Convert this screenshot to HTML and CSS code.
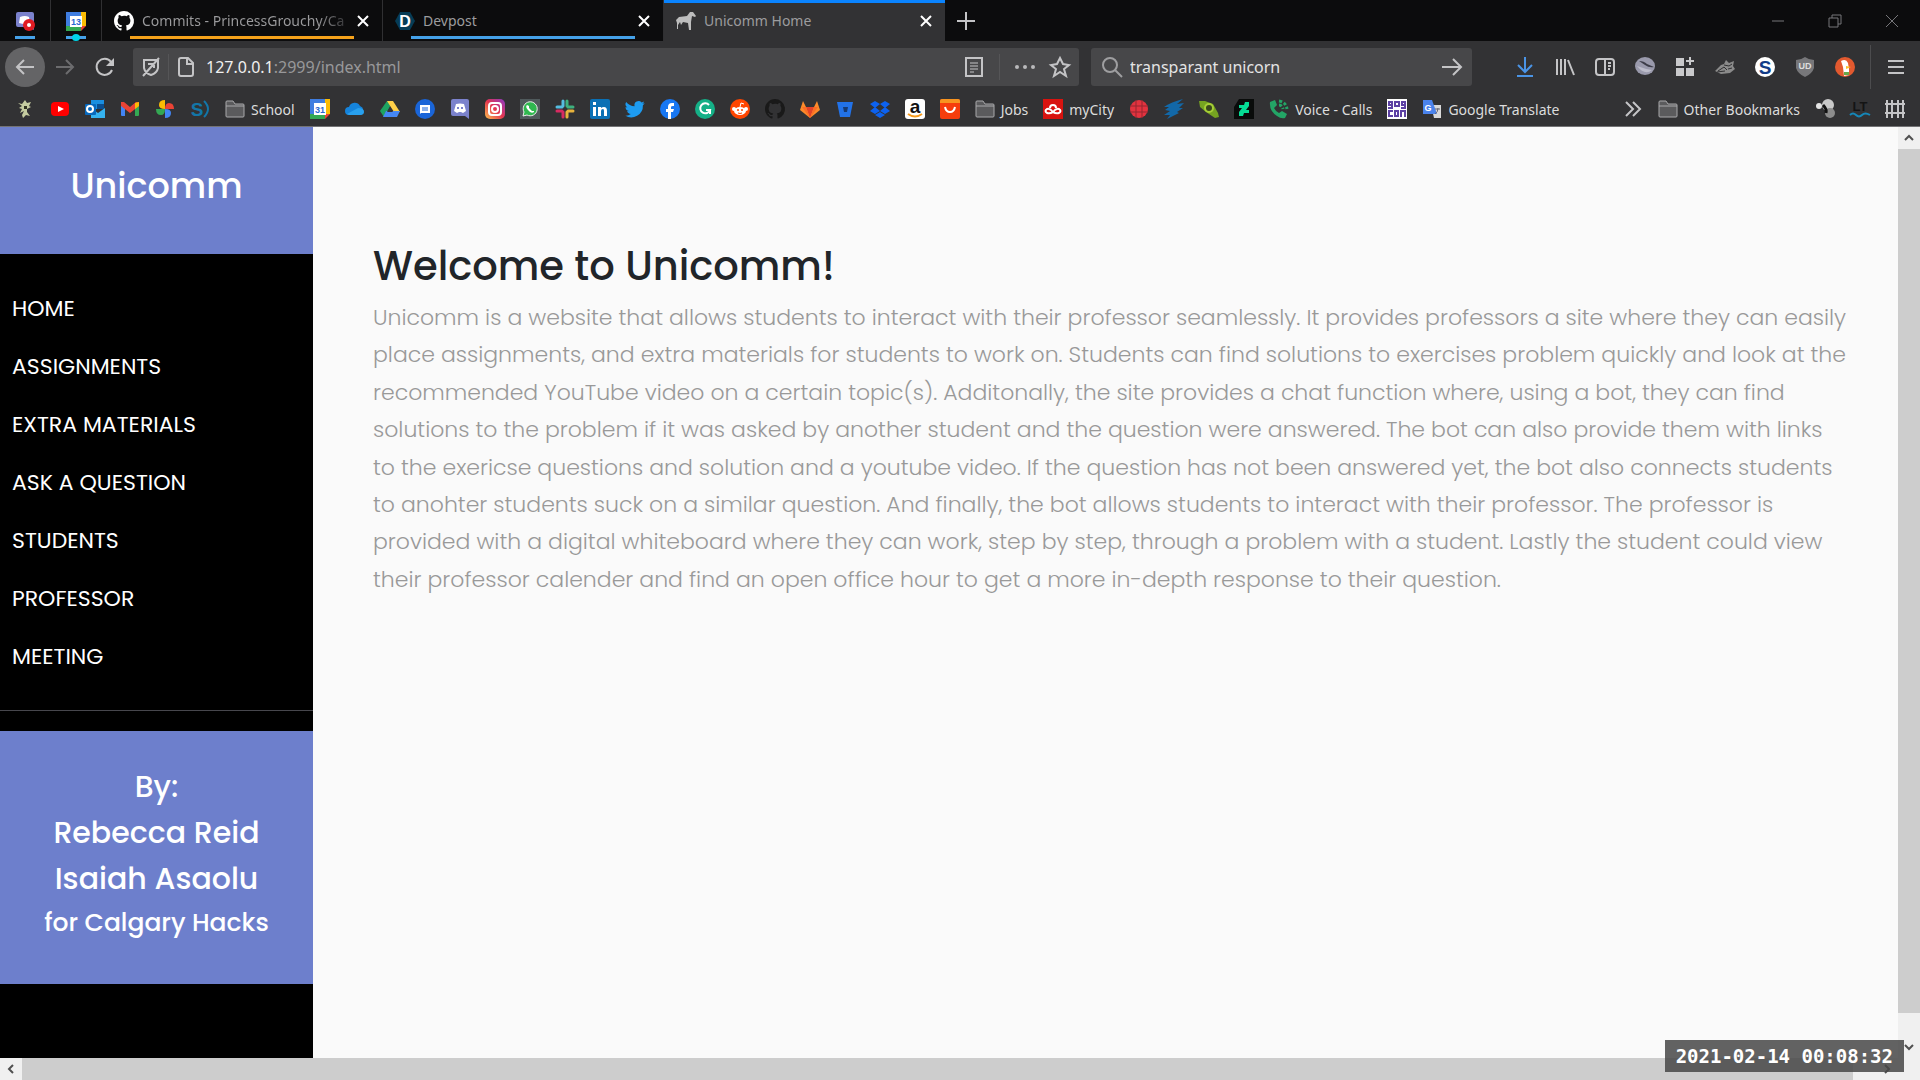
FILE: index.html
```html
<!DOCTYPE html>
<html lang="en">
<head>
  <meta charset="UTF-8">
  <meta name="viewport" content="width=device-width, initial-scale=1.0">
  <title>Unicomm Home</title>
  <link rel="stylesheet" href="styles.css">
</head>
<body>

<!-- Tabs -->
<header class="tabs">
  <a href="#" class="tab pinned" aria-label="Discord">
    <svg class="icon" viewBox="0 0 20 20"><path d="M1 3q0-2 2-2h14q2 0 2 2v16l-4-3H3q-2 0-2-2z" fill="#7b82cc"/><path d="M5 6q5-2 9 0l1 6q-5 2-11 0z" fill="#fff"/><circle cx="14" cy="14" r="6" fill="#e01b22"/><circle cx="14" cy="14" r="2" fill="#fff"/></svg>
    <span class="line blue"></span>
  </a>
  <a href="#" class="tab pinned" aria-label="Calendar">
    <svg class="icon" viewBox="0 0 20 20"><path d="M0 1h15v4H5v10H0z" fill="#3f7de0"/><path d="M15 1h5v14h-5z" fill="#fbbc05"/><path d="M0 15h15v5H0z" fill="#34a853"/><path d="M15 15h5l-5 5z" fill="#ea4335"/><path d="M4 5h12v11H4z" fill="#fff"/><text x="10" y="14" class="glyph small" fill="#2b67d1">13</text></svg>
    <span class="line blue dot"></span>
  </a>
  <a href="#" class="tab">
    <svg class="icon" viewBox="0 0 16 16"><path fill="#fff" d="M8 0C3.58 0 0 3.58 0 8c0 3.54 2.29 6.53 5.47 7.59.4.07.55-.17.55-.38v-1.49c-2.01.37-2.53-.49-2.69-.94-.09-.23-.48-.94-.82-1.13-.28-.15-.68-.52-.01-.53.63-.01 1.08.58 1.23.82.72 1.21 1.87.87 2.33.66.07-.52.28-.87.51-1.07-1.78-.2-3.64-.89-3.64-3.95 0-.87.31-1.59.82-2.15-.08-.2-.36-1.02.08-2.12 0 0 .67-.21 2.2.82A7.6 7.6 0 0 1 8 3.86c.68 0 1.36.09 2 .27 1.53-1.04 2.2-.82 2.2-.82.44 1.1.16 1.92.08 2.12.51.56.82 1.27.82 2.15 0 3.07-1.87 3.75-3.65 3.95.29.25.54.73.54 1.48v2.2c0 .21.15.46.55.38A8 8 0 0 0 8 0z"/></svg>
    <span class="tab-title fade">Commits - PrincessGrouchy/Ca</span>
    <button class="close" aria-label="Close tab"><svg viewBox="0 0 14 14"><path d="M2 2l10 10M12 2L2 12"/></svg></button>
    <span class="line orange"></span>
  </a>
  <a href="#" class="tab">
    <svg class="icon" viewBox="0 0 20 20"><path d="M5 1h10l5 9-5 9H5l-5-9z" fill="#063c55"/><text x="10" y="16" class="glyph big" fill="#fff">D</text></svg>
    <span class="tab-title">Devpost</span>
    <button class="close" aria-label="Close tab"><svg viewBox="0 0 14 14"><path d="M2 2l10 10M12 2L2 12"/></svg></button>
    <span class="line blue"></span>
  </a>
  <a href="#" class="tab active">
    <svg class="icon" viewBox="0 0 20 20"><path fill="#bdbdbd" d="M3 6l8-1 3-4 3 0 3 4-1 1-3-1-1 6 0 8h-2l-1-7-5-1-2 3v4H5v-4l-1-3-2 3 0 4H1l0-6-1-3z"/></svg>
    <span class="tab-title">Unicomm Home</span>
    <button class="close" aria-label="Close tab"><svg viewBox="0 0 14 14"><path d="M2 2l10 10M12 2L2 12"/></svg></button>
  </a>
  <button class="new-tab" aria-label="New tab"><svg viewBox="0 0 18 18"><path d="M9 0v18M0 9h18"/></svg></button>
  <div class="window-buttons">
    <button aria-label="Minimize"><svg viewBox="0 0 14 14"><path d="M1 7h12"/></svg></button>
    <button aria-label="Restore"><svg viewBox="0 0 14 14"><path d="M1 4h9v9H1zM4 4V1h9v9h-3"/></svg></button>
    <button aria-label="Close"><svg viewBox="0 0 14 14"><path d="M1 1l12 12M13 1L1 13"/></svg></button>
  </div>
</header>

<!-- Address bar -->
<div class="toolbar">
  <button class="round" aria-label="Back"><svg class="icon stroke" viewBox="0 0 20 20"><path d="M19 10H2M9 3l-7 7 7 7"/></svg></button>
  <button class="dim" aria-label="Forward"><svg class="icon stroke" viewBox="0 0 20 20"><path d="M1 10h17M11 3l7 7-7 7"/></svg></button>
  <button aria-label="Reload"><svg class="icon stroke" viewBox="0 0 20 20"><path d="M16 5a8 8 0 1 0 1 8"/><path d="M19 1v8h-8z" fill="#c4c4c6" stroke="none"/></svg></button>
  <div class="url">
    <svg class="icon stroke" viewBox="0 0 20 20"><path d="M3 3h14v8q-1 5-7 7-6-2-7-7zM18 1L2 19M7 7h6v4"/></svg>
    <span class="sep"></span>
    <svg class="icon stroke" viewBox="0 0 20 20"><path d="M3 3q0-2 2-2h7l5 5v11q0 2-2 2H5q-2 0-2-2zM11 1v6h6"/></svg>
    <label for="address">127.0.0.1</label>
    <input id="address" type="text" value=":2999/index.html">
    <button aria-label="Reader view"><svg class="icon stroke" viewBox="0 0 20 20"><path d="M2 1h16v18H2z"/><path d="M6 6h8M6 9h8M6 12h8M6 15h4" stroke-width="1"/></svg></button>
    <span class="sep far"></span>
    <button aria-label="Page actions"><svg class="icon" viewBox="0 0 20 20" fill="#b9b9bb"><circle cx="2" cy="10" r="2"/><circle cx="10" cy="10" r="2"/><circle cx="18" cy="10" r="2"/></svg></button>
    <button aria-label="Bookmark"><svg class="icon stroke" viewBox="0 0 20 20"><path d="M10 1l3 6 6 1-5 4 2 7-6-4-6 4 2-7-5-4 6-1z"/></svg></button>
  </div>
  <div class="search">
    <svg class="icon stroke" viewBox="0 0 20 20" opacity=".7"><circle cx="8" cy="8" r="7"/><path d="M13 13l7 7"/></svg>
    <input type="text" aria-label="Search" value="transparant unicorn">
    <button aria-label="Go"><svg class="icon stroke" viewBox="0 0 20 20"><path d="M0 10h19M11 2l8 8-8 8"/></svg></button>
  </div>
  <div class="extensions">
    <button aria-label="Downloads"><svg class="icon stroke download" viewBox="0 0 20 20"><path d="M10 0v14M3 8l7 7 7-7M2 19h16"/></svg></button>
    <button aria-label="Library"><svg class="icon stroke" viewBox="0 0 20 20"><path d="M2 2v16M6 2v16M10 2v16M13 3l6 15"/></svg></button>
    <button aria-label="Sidebars"><svg class="icon stroke" viewBox="0 0 20 20"><rect x="1" y="2" width="18" height="16" rx="3"/><path d="M10 2v16M13 6h3M13 9h3M13 12h2"/></svg></button>
    <button aria-label="Globe"><svg class="icon" viewBox="0 0 20 20"><ellipse cx="10" cy="9" rx="10" ry="9" fill="#9a9aac"/><path d="M4 4q5 0 8 3l7 3q-5 1-9-2z" fill="#3c3c48"/><path d="M2 9q8 3 15 4-7 6-15-4z" fill="#bcbcca"/></svg></button>
    <button aria-label="Add-ons"><svg class="icon" viewBox="0 0 20 20" fill="#c9c9cb"><path d="M1 1h8v8H1zM1 11h8v8H1zM11 11h8v8h-8zM14 0h2v3h3v2h-3v3h-2V5h-3V3h3z"/></svg></button>
    <button aria-label="Fox"><svg class="icon" viewBox="0 0 20 20"><path d="M0 14l6-6 3-1 2-4 3 3 5-2-1 5 2 3-5 4-9 1z" fill="#8a8a8a"/><path d="M3 14l6-4 3 3M9 8l5 1 3-2M13 12l4-1M2 15l8-1" stroke="#303032" fill="none"/></svg></button>
    <button aria-label="Startpage"><svg class="icon" viewBox="0 0 20 20"><circle cx="10" cy="10" r="10" fill="#fff"/><text x="10" y="17" class="glyph huge" fill="#123c87">S</text></svg></button>
    <button aria-label="uBlock"><svg class="icon" viewBox="0 0 20 20"><path d="M10 0q4 3 9 3v8q-2 6-9 9-7-3-9-9V3q5 0 9-3z" fill="#77777a"/><text x="10" y="12" class="glyph small" fill="#ddd">UD</text></svg></button>
    <button aria-label="DuckDuckGo"><svg class="icon" viewBox="0 0 20 20"><circle cx="10" cy="10" r="10" fill="#e2592f"/><path d="M6 4q5-3 7 2l1 6v6l-5 1-1-9z" fill="#fff"/><path d="M11 9l5 1-5 2z" fill="#fbc02d"/><path d="M9 15h5v3H9z" fill="#67a84a"/></svg></button>
  </div>
  <button class="menu" aria-label="Menu"><svg viewBox="0 0 16 16"><path d="M0 2h16M0 8h16M0 14h16"/></svg></button>
</div>

<!-- Bookmarks -->
<nav class="bookmarks" aria-label="Bookmarks">
  <a href="#" aria-label="Imp"><svg class="icon" viewBox="0 0 20 20"><path d="M3 4l4 1 3-4 2 3 4-1-2 4 2 1-4 2 0 3 3 4-4-1-3 3-1-3 2-4-4 2 2-4-3-1 3-2z" fill="#c5cca0"/><path d="M9 7h3v3H9z" fill="#30331f"/></svg></a>
  <a href="#" aria-label="YouTube"><svg class="icon" viewBox="0 0 20 20"><rect x="1" y="3" width="18" height="14" rx="4" fill="#f00"/><path d="M8 7l6 3-6 3z" fill="#fff"/></svg></a>
  <a href="#" aria-label="Outlook"><svg class="icon" viewBox="0 0 20 20"><path d="M6 1h13v9H6z" fill="#1a8fe0"/><path d="M6 9l7 5 7-5v10H6z" fill="#35b3f0"/><path d="M12 5h7v5h-7z" fill="#0a4f91"/><rect y="5" width="11" height="11" rx="1" fill="#0869bd"/><circle cx="5" cy="10" r="3" fill="none" stroke="#fff" stroke-width="2"/></svg></a>
  <a href="#" aria-label="Gmail"><svg class="icon" viewBox="0 0 20 20"><path d="M1 4h4v13H2q-1 0-1-1z" fill="#4285f4"/><path d="M15 4h4v12q0 1-1 1h-3z" fill="#34a853"/><path d="M1 3h3l6 5 6-5h3v4l-9 7-9-7z" fill="#ea4335"/><path d="M15 4l4-1v4l-4 3z" fill="#fbbc04"/></svg></a>
  <a href="#" aria-label="Photos"><svg class="icon" viewBox="0 0 20 20"><path d="M10 10V1q-6 0-6 5 0 4 6 4z" fill="#fbbc04"/><path d="M10 10h9q0-6-5-6-4 0-4 6z" fill="#ea4335"/><path d="M10 10v9q6 0 6-5 0-4-6-4z" fill="#4285f4"/><path d="M10 10H1q0 6 5 6 4 0 4-6z" fill="#34a853"/></svg></a>
  <a href="#" aria-label="SharePoint"><svg class="icon" viewBox="0 0 20 20"><text x="7" y="17" class="glyph huge" fill="#1276a8">S</text><path d="M14 2q8 8 0 16" stroke="#1276a8" stroke-width="2" fill="none"/></svg></a>
  <a href="#"><svg class="icon folder" viewBox="0 0 20 20"><path d="M1 17V3q0-1 1-1h6l2 3h8q1 0 1 1v11q0 1-1 1H2q-1 0-1-1zM1 7h18"/></svg>School</a>
  <a href="#" aria-label="Google Calendar"><svg class="icon" viewBox="0 0 20 20"><path d="M0 0h15v5H5v10H0z" fill="#3f7de0"/><path d="M15 0h5v15h-5z" fill="#fbbc05"/><path d="M0 15h15v5H0z" fill="#34a853"/><path d="M15 15h5l-5 5z" fill="#ea4335"/><path d="M4 4h12v12H4z" fill="#fff"/><text x="10" y="14" class="glyph small" fill="#2b67d1">31</text></svg></a>
  <a href="#" aria-label="OneDrive"><svg class="icon" viewBox="0 0 20 20"><path d="M4 16a4 4 0 0 1 0-8 6 6 0 0 1 11-1 5 5 0 0 1 1 9z" fill="#1584dc"/><path d="M2 15l11-6q6 0 6 4 0 3-4 3H4z" fill="#28a0ee"/></svg></a>
  <a href="#" aria-label="Drive"><svg class="icon" viewBox="0 0 20 20"><path d="M7 2h6l-9 16-4-6z" fill="#1ea362"/><path d="M7 2h6l7 11h-6z" fill="#ffcf48"/><path d="M6 12h14l-3 6H3z" fill="#4587f4"/><path d="M10 8l3 5H7z" fill="#333335"/></svg></a>
  <a href="#" aria-label="Messages"><svg class="icon" viewBox="0 0 20 20"><circle cx="10" cy="10" r="10" fill="#1a65d8"/><path d="M5 6h10v8H6l-1 1z" fill="#fff"/><path d="M7 9h6M7 11h6" stroke="#1a65d8"/></svg></a>
  <a href="#" aria-label="Discord"><svg class="icon" viewBox="0 0 20 20"><path d="M1 2q0-2 2-2h14q2 0 2 2v18l-4-3H3q-2 0-2-2z" fill="#7b82cc"/><path d="M6 5q4-1 8 0l2 7-3 2-2-1H9l-2 1-3-2z" fill="#fff"/><path d="M7 8h2v2H7zM11 8h2v2h-2z" fill="#7b82cc"/></svg></a>
  <a href="#" aria-label="Instagram"><svg class="icon" viewBox="0 0 20 20"><defs><linearGradient id="insta" x1="0" y1="1" x2="1" y2="0"><stop offset="0" stop-color="#fdc04e"/><stop offset=".5" stop-color="#e4354f"/><stop offset="1" stop-color="#8a3ac8"/></linearGradient></defs><rect width="20" height="20" rx="5" fill="url(#insta)"/><g fill="none" stroke="#fff" stroke-width="2"><rect x="4" y="4" width="12" height="12" rx="3"/><circle cx="10" cy="10" r="3"/></g></svg></a>
  <a href="#" aria-label="WhatsApp"><svg class="icon" viewBox="0 0 20 20"><path d="M0 0h20v20H0z" fill="#505a5c"/><path d="M3 17l1-4a7 7 0 1 1 3 3z" fill="#2fb84f" stroke="#eee"/><path d="M7 6l2 1v2l3 3h2v1q-3 2-6-2-3-3-1-5z" fill="#fff"/></svg></a>
  <a href="#" aria-label="Slack"><svg class="icon" viewBox="0 0 20 20"><g fill="none" stroke-width="3" stroke-linecap="round"><path d="M8 2v5M2 8h5" stroke="#55bde0"/><path d="M12 2v5M13 8h5" stroke="#3eb07e"/><path d="M12 13v5M13 12h5" stroke="#e8b33c"/><path d="M8 13v5M2 12h5" stroke="#d72a61"/></g></svg></a>
  <a href="#" aria-label="LinkedIn"><svg class="icon" viewBox="0 0 20 20"><rect width="20" height="20" rx="2" fill="#0a70b5"/><path d="M3 8h3v9H3zM3 3h3v3H3zM8 8h3v1q1-1 3-1 3 0 3 4v5h-3v-5q0-2-1-2-2 0-2 2v5H8z" fill="#fff"/></svg></a>
  <a href="#" aria-label="Twitter"><svg class="icon" viewBox="0 0 24 24"><path fill="#1d9bf0" d="M23.6 4.9a9.6 9.6 0 0 1-2.8.8 4.9 4.9 0 0 0 2.2-2.7 9.8 9.8 0 0 1-3.1 1.2 4.9 4.9 0 0 0-8.4 4.5A14 14 0 0 1 1.4 3.5a4.9 4.9 0 0 0 1.5 6.6 4.9 4.9 0 0 1-2.2-.6 4.9 4.9 0 0 0 3.9 4.9 4.9 4.9 0 0 1-2.2.1 4.9 4.9 0 0 0 4.6 3.4A9.9 9.9 0 0 1 0 19.9a14 14 0 0 0 21.5-12.4 10 10 0 0 0 2.1-2.6z"/></svg></a>
  <a href="#" aria-label="Facebook"><svg class="icon" viewBox="0 0 20 20"><circle cx="10" cy="10" r="10" fill="#1877f2"/><path d="M8 20v-7H6v-3h2V8q0-4 4-4h2v3h-1q-2 0-2 1v2h3l-1 3h-2v7z" fill="#fff"/></svg></a>
  <a href="#" aria-label="Grammarly"><svg class="icon" viewBox="0 0 20 20"><circle cx="10" cy="10" r="10" fill="#15b087"/><path d="M14 6a5 5 0 1 0 1 5h-4M15 11v4" stroke="#fff" stroke-width="2" fill="none"/></svg></a>
  <a href="#" aria-label="Reddit"><svg class="icon" viewBox="0 0 20 20"><circle cx="10" cy="10" r="10" fill="#ff4500"/><ellipse cx="10" cy="12" rx="6" ry="4" fill="#fff"/><circle cx="4" cy="10" r="2" fill="#fff"/><circle cx="16" cy="10" r="2" fill="#fff"/><path d="M10 8l1-4 3 1" stroke="#fff" fill="none"/><circle cx="8" cy="11" r="1" fill="#ff4500"/><circle cx="12" cy="11" r="1" fill="#ff4500"/><path d="M8 14q2 1 4 0" stroke="#ff4500" fill="none"/></svg></a>
  <a href="#" aria-label="GitHub"><svg class="icon" viewBox="0 0 16 16"><path fill="#191919" d="M8 0C3.58 0 0 3.58 0 8c0 3.54 2.29 6.53 5.47 7.59.4.07.55-.17.55-.38v-1.49c-2.01.37-2.53-.49-2.69-.94-.09-.23-.48-.94-.82-1.13-.28-.15-.68-.52-.01-.53.63-.01 1.08.58 1.23.82.72 1.21 1.87.87 2.33.66.07-.52.28-.87.51-1.07-1.78-.2-3.64-.89-3.64-3.95 0-.87.31-1.59.82-2.15-.08-.2-.36-1.02.08-2.12 0 0 .67-.21 2.2.82A7.6 7.6 0 0 1 8 3.86c.68 0 1.36.09 2 .27 1.53-1.04 2.2-.82 2.2-.82.44 1.1.16 1.92.08 2.12.51.56.82 1.27.82 2.15 0 3.07-1.87 3.75-3.65 3.95.29.25.54.73.54 1.48v2.2c0 .21.15.46.55.38A8 8 0 0 0 8 0z"/></svg></a>
  <a href="#" aria-label="GitLab"><svg class="icon" viewBox="0 0 20 20"><path d="M10 19L0 11l3-9 3 6h8l3-6 3 9z" fill="#fc8a2a"/><path d="M10 19L6 8h8z" fill="#e24329"/><path d="M10 19L2 8h4zM10 19l8-11h-4z" fill="#fc6d26"/></svg></a>
  <a href="#" aria-label="Bitbucket"><svg class="icon" viewBox="0 0 20 20"><path d="M2 3h16l-3 15H5z" fill="#2272e8"/><path d="M8 8h5l-1 5H9z" fill="#163a73"/></svg></a>
  <a href="#" aria-label="Dropbox"><svg class="icon" viewBox="0 0 20 20"><path d="M5 2l5 3-5 4-5-4zM15 2l5 3-5 4-5-4zM5 8l5 4-5 3-5-3zM15 8l5 4-5 3-5-3zM10 13l5 3-5 3-5-3z" fill="#0d62ef"/></svg></a>
  <a href="#" aria-label="Amazon"><svg class="icon" viewBox="0 0 20 20"><rect width="20" height="20" rx="3" fill="#fff"/><text x="10" y="14" class="glyph huge" fill="#111">a</text><path d="M3 15q7 5 14 0" stroke="#f79a1c" stroke-width="2" fill="none"/></svg></a>
  <a href="#" aria-label="AliExpress"><svg class="icon" viewBox="0 0 20 20"><rect width="20" height="20" rx="2" fill="#f63d0c"/><path d="M0 2q0-2 2-2h16q2 0 2 2v2H0z" fill="#f79420"/><path d="M5 8q1 5 5 5t5-5" stroke="#fff" stroke-width="2" fill="none"/></svg></a>
  <a href="#"><svg class="icon folder" viewBox="0 0 20 20"><path d="M1 17V3q0-1 1-1h6l2 3h8q1 0 1 1v11q0 1-1 1H2q-1 0-1-1zM1 7h18"/></svg>Jobs</a>
  <a href="#"><svg class="icon" viewBox="0 0 20 20"><path d="M0 0h20v20H0z" fill="#d8130f"/><g fill="none" stroke="#fff" stroke-width="2"><path d="M7 9a3 3 0 1 1 6 0"/><path d="M10 13q-3-4-6-3-3 2 0 4 3 1 6-1 3 2 6 1 3-2 0-4-3-1-6 3z"/></g></svg>myCity</a>
  <a href="#" aria-label="CBC"><svg class="icon" viewBox="0 0 20 20"><circle cx="10" cy="10" r="9" fill="#e3333f"/><path d="M7 1v18M13 1v18M1 7h18M1 13h18" stroke="#952731"/></svg></a>
  <a href="#" aria-label="Swift"><svg class="icon" viewBox="0 0 20 20"><path d="M0 8q7-5 19-8l-6 5 7-1-5 5 4 0-6 4 2 1L3 20l3-4-6 0 6-4-5-1 4-3z" fill="#1268a8"/></svg></a>
  <a href="#" aria-label="Nut"><svg class="icon" viewBox="0 0 20 20"><path d="M0 2l6 0 8 3 5 9 1 4-4 1-9-6-6-5z" fill="#76a321"/><circle cx="10" cy="9" r="4" fill="#39471d" stroke="#a6ce37" stroke-width="2"/></svg></a>
  <a href="#" aria-label="DeviantArt"><svg class="icon" viewBox="0 0 20 20"><path d="M0 8L5 0h15v20H0z" fill="#090b0a"/><path d="M11 3h4v4l-3 4h3v3h-5l-1 3H5v-4l3-4H5V6h5z" fill="#05db94"/></svg></a>
  <a href="#"><svg class="icon" viewBox="0 0 20 20"><path d="M1 3l5-2 2 5-3 3q2 4 5 5l3-2 5 3-2 4q-4 1-8-2-8-5-7-14z" fill="#23a566"/><path d="M10 2q7 1 8 8M10 6q3 0 4 4" stroke="#23a566" stroke-width="3" stroke-dasharray="3 2" fill="none"/></svg>Voice - Calls</a>
  <a href="#" aria-label="GOG"><svg class="icon" viewBox="0 0 20 20"><path d="M0 0h20v20H0z" fill="#fff"/><g fill="none" stroke="#5d41a3" stroke-width="2"><path d="M5 3H2v3h3zM5 3v6H1M8 3h4v4H8zM18 3h-3v3h3zM18 3v6h-4M6 12H2v5h4M8 12h3v5H8zM14 18v-6h4v6"/></g></svg></a>
  <a href="#"><svg class="icon" viewBox="0 0 20 20"><path d="M9 6h10v13h-7z" fill="#d9d9d9"/><path d="M1 1h9l5 14H1z" fill="#4a83ec"/><text x="6" y="12" class="glyph small" fill="#fff">G</text><path d="M13 10h5M16 9q0 4-3 6" stroke="#667" fill="none"/></svg>Google Translate</a>
  <div class="bookmarks-end">
    <a href="#" aria-label="More bookmarks"><svg class="icon stroke" viewBox="0 0 20 20"><path d="M3 3l7 7-7 7M10 3l7 7-7 7"/></svg></a>
    <a href="#"><svg class="icon folder" viewBox="0 0 20 20"><path d="M1 17V3q0-1 1-1h6l2 3h8q1 0 1 1v11q0 1-1 1H2q-1 0-1-1zM1 7h18"/></svg>Other Bookmarks</a>
    <a href="#" aria-label="Molecule"><svg class="icon" viewBox="0 0 20 20"><circle cx="13" cy="6" r="6" fill="#c9c9c9"/><circle cx="15" cy="14" r="5" fill="#8c8c8c"/><circle cx="4" cy="7" r="3" fill="#e4e4e4"/><path d="M8 6q4 4 3 8" stroke="#111" stroke-width="3" fill="none"/></svg></a>
    <a href="#" aria-label="LanguageTool"><svg class="icon" viewBox="0 0 20 20"><text x="10" y="12" class="glyph medium" fill="#141414">LT</text><path d="M0 16q3-3 6 0t6 0 8 0" stroke="#1587b8" stroke-width="2" fill="none"/></svg></a>
    <a href="#" aria-label="Fence"><svg class="icon stroke" viewBox="0 0 20 20"><path d="M2 1v18M7 1v18M13 1v18M18 1v18M0 5h20M0 14h20"/></svg></a>
  </div>
</nav>

<!-- Page -->
<div class="viewport">
  <div class="page">
    <aside class="sidebar">
      <h3 class="brand">Unicomm</h3>
      <ul class="menu-list">
        <li><a href="#">HOME</a></li>
        <li><a href="#">ASSIGNMENTS</a></li>
        <li><a href="#">EXTRA MATERIALS</a></li>
        <li><a href="#">ASK A QUESTION</a></li>
        <li><a href="#">STUDENTS</a></li>
        <li><a href="#">PROFESSOR</a></li>
        <li><a href="#">MEETING</a></li>
      </ul>
      <div class="credits">
        <h4>By:</h4>
        <h4>Rebecca Reid</h4>
        <h4>Isaiah Asaolu</h4>
        <h5>for Calgary Hacks</h5>
      </div>
    </aside>
    <main class="content">
      <h2>Welcome to Unicomm!</h2>
      <p>Unicomm is a website that allows students to interact with their professor seamlessly. It provides professors a site where they can easily<br>
      place assignments, and extra materials for students to work on. Students can find solutions to exercises problem quickly and look at the<br>
      recommended YouTube video on a certain topic(s). Additonally, the site provides a chat function where, using a bot, they can find<br>
      solutions to the problem if it was asked by another student and the question were answered. The bot can also provide them with links<br>
      to the exericse questions and solution and a youtube video. If the question has not been answered yet, the bot also connects students<br>
      to anohter students suck on a similar question. And finally, the bot allows students to interact with their professor. The professor is<br>
      provided with a digital whiteboard where they can work, step by step, through a problem with a student. Lastly the student could view<br>
      their professor calender and find an open office hour to get a more in-depth response to their question.</p>
    </main>
  </div>
  <div class="scroll vertical">
    <svg viewBox="0 0 22 22"><path d="M7 13l4-4 4 4"/></svg>
    <span class="thumb"></span>
    <svg viewBox="0 0 22 22"><path d="M7 9l4 4 4-4"/></svg>
  </div>
  <div class="scroll horizontal">
    <svg viewBox="0 0 22 22"><path d="M13 7l-4 4 4 4"/></svg>
    <span class="thumb"></span>
    <svg viewBox="0 0 22 22"><path d="M9 7l4 4-4 4"/></svg>
  </div>
  <time class="stamp">2021-02-14 00:08:32</time>
</div>

</body>
</html>
```

FILE: styles.css
```css
* { box-sizing: border-box; }
body {
  margin: 0;
  height: 100vh;
  display: flex;
  flex-direction: column;
  overflow: hidden;
  background: #323234;
  color: #dcdcdc;
  font-family: "Noto Sans", "Open Sans", sans-serif;
  font-size: 14px;
}
a { color: inherit; text-decoration: none; }
button {
  display: flex;
  align-items: center;
  justify-content: center;
  padding: 0;
  border: 0;
  background: none;
  color: inherit;
  cursor: pointer;
}
input {
  min-width: 0;
  padding: 0;
  border: 0;
  outline: 0;
  background: none;
  font: inherit;
}
.icon { width: 20px; height: 20px; flex: none; display: block; overflow: visible; }
.stroke { stroke: #c4c4c6; stroke-width: 2; fill: none; }
.download { stroke: #4a94e6; }
.folder { stroke: #a9a9ab; fill: #5b5b5d; }
.glyph { font-family: "Liberation Sans", sans-serif; font-weight: bold; text-anchor: middle; }
.small { font-size: 9px; }
.medium { font-size: 13px; }
.big { font-size: 16px; }
.huge { font-size: 19px; }

/* tabs */
.tabs { display: flex; height: 41px; flex: none; background: #0c0c0d; }
.tab {
  position: relative;
  display: flex;
  align-items: center;
  gap: 8px;
  flex: 0 1 281px;
  min-width: 0;
  padding: 0 12px;
  border-right: 1px solid #303032;
  color: #9c9c9e;
}
.tab.pinned { flex: none; width: 51px; padding: 0 15px; }
.tab.active { background: #323234; border: 0; box-shadow: inset 0 3px #0a84ff; }
.tab-title { flex: 1; min-width: 0; white-space: nowrap; }
.fade {
  color: transparent;
  background: linear-gradient(to right, #9c9c9e 85%, #2c2c2e);
  background-clip: text;
  -webkit-background-clip: text;
}
.close svg { width: 14px; height: 14px; stroke: #fff; stroke-width: 2; }
.line { position: absolute; left: 28px; right: 28px; bottom: 2px; height: 3px; }
.pinned .line { left: 15px; right: 15px; }
.blue { background: #45a1e8; }
.orange { background: #f5a21b; }
.dot::after {
  content: "";
  position: absolute;
  left: 6px;
  top: -2px;
  width: 8px;
  height: 7px;
  border-radius: 50%;
  background: #00d5e8;
}
.new-tab { width: 42px; }
.new-tab svg { width: 18px; height: 18px; stroke: #c4c4c6; stroke-width: 2; }
.window-buttons { display: flex; margin-left: auto; }
.window-buttons button { width: 57px; }
.window-buttons svg { width: 14px; height: 14px; stroke: #77777a; fill: none; }

/* toolbar */
.toolbar { display: flex; align-items: center; height: 50px; flex: none; padding: 2px 0 0 5px; }
.toolbar > button { width: 40px; height: 40px; }
.toolbar > .round { border-radius: 50%; background: #646466; }
.dim { opacity: .4; }
.url, .search {
  display: flex;
  align-items: center;
  height: 38px;
  border-radius: 3px;
  background: #474749;
  font-size: 16px;
}
.url { flex: 1; margin-left: 8px; padding: 0 9px 0 8px; }
.url label { margin-left: 10px; color: #f0f0f0; }
.url input { flex: 1; color: #98989a; }
.url .sep { width: 1px; height: 26px; margin: 0 7px; background: #555557; }
.url .far { margin: 0 15px; }
.url button + button { margin-left: 15px; }
.search { width: 381px; margin: 0 43px 0 12px; padding: 0 10px 0 11px; gap: 8px; }
.search input { flex: 1; color: #e4e4e4; }
.extensions { display: flex; gap: 20px; }
.toolbar > .menu { width: 50px; height: 44px; margin-left: 15px; border-left: 1px solid #4c4c4e; }
.menu svg { width: 16px; height: 16px; stroke: #c4c4c6; stroke-width: 2; }

/* bookmarks */
.bookmarks {
  display: flex;
  align-items: center;
  gap: 15px;
  height: 36px;
  flex: none;
  padding: 1px 15px 0;
  border-bottom: 1px solid #737375;
  white-space: nowrap;
}
.bookmarks a, .bookmarks-end { display: flex; align-items: center; gap: 6px; }
.bookmarks-end { gap: 15px; margin-left: auto; }

/* page */
.viewport {
  position: relative;
  flex: 1;
  min-height: 0;
  display: grid;
  grid-template: minmax(0, 1fr) 22px / minmax(0, 1fr) 22px;
  background: #f0f0f0;
}
.page {
  display: flex;
  background: #fafafa;
  font-family: Poppins, Inter, sans-serif;
}
.sidebar { flex: none; width: 313px; background: #000; color: #fff; overflow: hidden; }
.brand {
  margin: 0;
  padding: 39px 20px 48px;
  background: #6d7fcc;
  font-size: 35px;
  line-height: 40px;
  font-weight: 500;
  text-align: center;
}
.menu-list {
  margin: 0 0 20px;
  padding: 26px 0 24px;
  border-bottom: 1px solid #47474d;
  list-style: none;
}
.menu-list a { display: block; padding: 12px; font-size: 22px; line-height: 34px; }
.credits {
  padding: 33px 20px 40px;
  background: #6d7fcc;
  text-align: center;
}
.credits h4, .credits h5 { margin: 0; font-weight: 500; line-height: 46px; }
.credits h4 { font-size: 30px; }
.credits h5 { font-size: 25px; line-height: 42px; }
.content { flex: 1; padding: 114px 50px 0 60px; }
.content h2 { margin: 0 0 8px; color: #212529; font-size: 40px; line-height: 50px; font-weight: 500; }
.content p { margin: 0; color: #999; font-size: 22px; line-height: 1.7; font-weight: 300; white-space: nowrap; }

/* scrollbars */
.scroll { display: flex; background: #f0f0f0; }
.vertical { flex-direction: column; }
.scroll svg { flex: none; width: 22px; height: 22px; stroke: #505050; stroke-width: 2; fill: none; }
.thumb { flex: 1; background: #cdcdcd; }
.vertical .thumb { margin-bottom: 23px; }
.horizontal .thumb { margin-right: 23px; }

.stamp {
  position: absolute;
  right: 16px;
  bottom: 8px;
  padding: 0 11px;
  background: rgba(70, 70, 70, .85);
  color: #fff;
  font-family: "DejaVu Sans Mono", monospace;
  font-size: 19px;
  font-weight: bold;
  line-height: 32px;
}
```
